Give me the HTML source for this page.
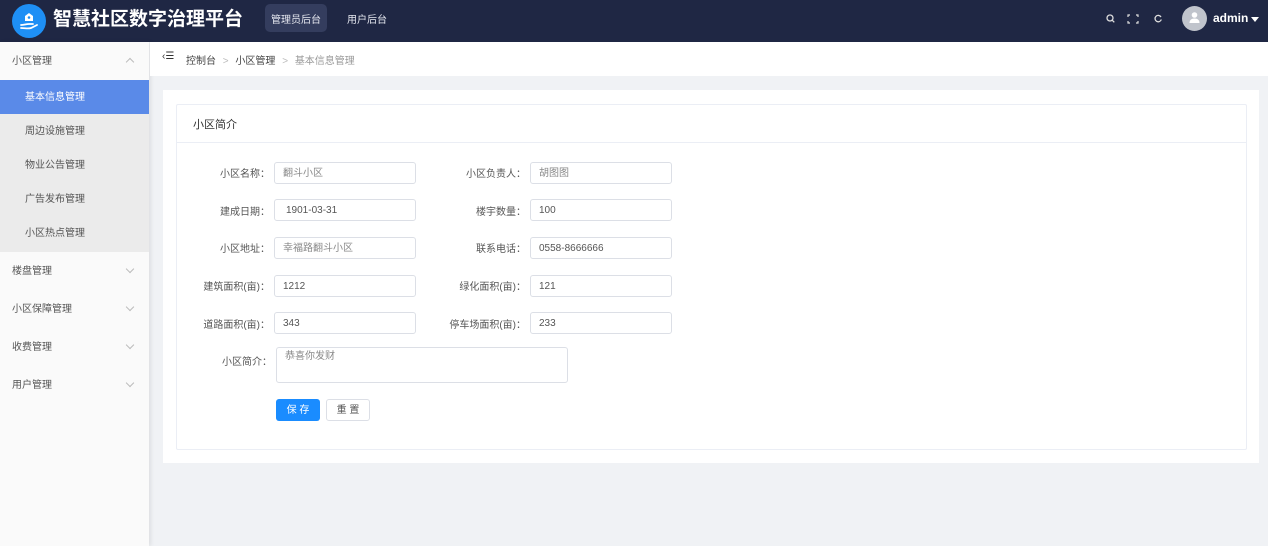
<!DOCTYPE html>
<html><head><meta charset="utf-8"><style>
*{margin:0;padding:0;box-sizing:border-box}
body{width:1268px;height:546px;overflow:hidden;background:#f0f2f5;font-family:"Liberation Sans","Noto Sans CJK SC",sans-serif;font-size:10px;color:#555;position:relative}
.a{position:absolute}
.hd{left:0;top:0;width:1268px;height:42px;background:#1f2744}
.sb{left:0;top:42px;width:149px;height:504px;background:#fafafa;box-shadow:2px 0 4px rgba(0,0,0,.08)}
.mi{position:absolute;left:0;width:149px;padding-left:12px;color:#555;font-size:10px}
.si{position:absolute;left:0;width:149px;height:34px;line-height:36px;padding-left:25px;background:#ebebeb;color:#555}
.chev{position:absolute;right:16px;width:6px;height:6px;border-right:1px solid #bbb;border-bottom:1px solid #bbb;transform:rotate(45deg)}
.lb{position:absolute;text-align:right;width:120px;font-size:10px;color:#555}
.in{position:absolute;width:142px;height:22px;border:1px solid #dcdfe6;border-radius:3px;background:#fff;padding-left:8px;line-height:22px;font-size:10px;color:#555}
</style></head><body>
<div class="a hd"></div>
<div class="a" style="left:12px;top:4px;width:34px;height:34px;border-radius:50%;background:#1e8ff5"></div>
<svg class="a" style="left:17px;top:9px" width="24" height="24" viewBox="0 0 24 24"><path d="M8 12V7l4-3 4 3v5z" fill="#fff"/><circle cx="12" cy="8.5" r="1.3" fill="#1e8ff5"/><path d="M4 16c3 0 5-1 8-1h4M4 19c4 0 7 1 10 0l6-3" stroke="#fff" stroke-width="1.8" fill="none" stroke-linecap="round"/></svg>
<div class="a" style="left:53px;top:8px;color:#fff;font-size:19px;font-weight:bold;line-height:24px">智慧社区数字治理平台</div>
<div class="a" style="left:265px;top:4px;width:62px;height:28px;border-radius:5px;background:#343d5e"></div>
<div class="a" style="left:265px;top:11px;width:62px;color:#e6e8f0;font-size:10px;line-height:20px;text-align:center">管理员后台</div>
<div class="a" style="left:347px;top:11px;line-height:20px;color:#e6e8f0;font-size:10px">用户后台</div>
<svg class="a" style="left:1105px;top:13px" width="60" height="12" viewBox="0 0 60 12"><circle cx="5" cy="5" r="3" stroke="#ddd" stroke-width="1.3" fill="none"/><path d="M7.3 7.3l2 2" stroke="#ddd" stroke-width="1.3"/><path d="M25 2h-2v2M31 2h2v2M25 10h-2V8M31 10h2V8" stroke="#ddd" stroke-width="1.2" fill="none"/><path d="M56 4a3.2 3.2 0 1 0 .3 2.5" stroke="#ddd" stroke-width="1.3" fill="none"/></svg>
<div class="a" style="left:1182px;top:6px;width:25px;height:25px;border-radius:50%;background:#c0c4cc"></div>
<svg class="a" style="left:1188px;top:11px" width="13" height="14" viewBox="0 0 13 14"><circle cx="6.5" cy="4" r="2.8" fill="#fff"/><path d="M1.5 12c0-3 2-4.5 5-4.5s5 1.5 5 4.5z" fill="#fff"/></svg>
<div class="a" style="left:1213px;top:11px;color:#fff;font-size:12px;font-weight:bold">admin</div>
<div class="a" style="left:1251px;top:17px;border-left:4px solid transparent;border-right:4px solid transparent;border-top:5px solid #fff"></div>

<div class="a sb"></div>
<div class="mi" style="top:42px;height:38px;line-height:40px">小区管理<span class="chev" style="top:17px;transform:rotate(225deg)"></span></div>
<div class="si" style="top:80px;background:#5a8ae8;color:#fff">基本信息管理</div>
<div class="si" style="top:114px">周边设施管理</div>
<div class="si" style="top:148px">物业公告管理</div>
<div class="si" style="top:182px">广告发布管理</div>
<div class="si" style="top:216px;height:36px">小区热点管理</div>
<div class="mi" style="top:252px;height:38px;line-height:40px">楼盘管理<span class="chev" style="top:14px"></span></div>
<div class="mi" style="top:290px;height:38px;line-height:40px">小区保障管理<span class="chev" style="top:14px"></span></div>
<div class="mi" style="top:328px;height:38px;line-height:40px">收费管理<span class="chev" style="top:14px"></span></div>
<div class="mi" style="top:366px;height:38px;line-height:40px">用户管理<span class="chev" style="top:14px"></span></div>

<div class="a" style="left:150px;top:42px;width:1118px;height:34px;background:#fff"></div>
<div class="a" style="left:162px;top:51px;font-size:10px;color:#333">‹☰</div>
<div class="a" style="left:186px;top:52px;font-size:10px;color:#444">控制台 <span style="color:#bbb;margin:0 4px">&gt;</span> 小区管理 <span style="color:#bbb;margin:0 4px">&gt;</span> <span style="color:#999">基本信息管理</span></div>

<div class="a" style="left:163px;top:90px;width:1096px;height:373px;background:#fff"></div>
<div class="a" style="left:176px;top:104px;width:1071px;height:346px;border:1px solid #ebeef5;border-radius:2px"></div>
<div class="a" style="left:177px;top:142px;width:1069px;height:1px;background:#ebeef5"></div>
<div class="a" style="left:193px;top:116px;font-size:11px;color:#333">小区简介</div>

<div class="lb" style="left:150px;top:165px">小区名称：</div><div class="in" style="left:274px;top:162px;color:#888">翻斗小区</div>
<div class="lb" style="left:406px;top:165px">小区负责人：</div><div class="in" style="left:530px;top:162px;color:#888">胡图图</div>
<div class="lb" style="left:150px;top:203px">建成日期：</div><div class="in" style="left:274px;top:199px;padding-left:11px">1901-03-31</div>
<div class="lb" style="left:406px;top:203px">楼宇数量：</div><div class="in" style="left:530px;top:199px">100</div>
<div class="lb" style="left:150px;top:240px">小区地址：</div><div class="in" style="left:274px;top:237px;color:#888">幸福路翻斗小区</div>
<div class="lb" style="left:406px;top:240px">联系电话：</div><div class="in" style="left:530px;top:237px">0558-8666666</div>
<div class="lb" style="left:150px;top:278px">建筑面积(亩)：</div><div class="in" style="left:274px;top:275px">1212</div>
<div class="lb" style="left:406px;top:278px">绿化面积(亩)：</div><div class="in" style="left:530px;top:275px">121</div>
<div class="lb" style="left:150px;top:316px">道路面积(亩)：</div><div class="in" style="left:274px;top:312px">343</div>
<div class="lb" style="left:406px;top:316px">停车场面积(亩)：</div><div class="in" style="left:530px;top:312px">233</div>
<div class="lb" style="left:152px;top:353px">小区简介：</div>
<div class="in" style="left:276px;top:347px;width:292px;height:36px;line-height:14px;padding-top:2px;color:#888">恭喜你发财</div>
<div class="a" style="left:276px;top:399px;width:44px;height:22px;background:#1a8cff;border-radius:3px;color:#fff;text-align:center;line-height:23px;font-size:10px">保 存</div>
<div class="a" style="left:326px;top:399px;width:44px;height:22px;border:1px solid #dcdfe6;border-radius:3px;color:#555;text-align:center;line-height:21px;font-size:10px;background:#fff">重 置</div>
</body></html>
